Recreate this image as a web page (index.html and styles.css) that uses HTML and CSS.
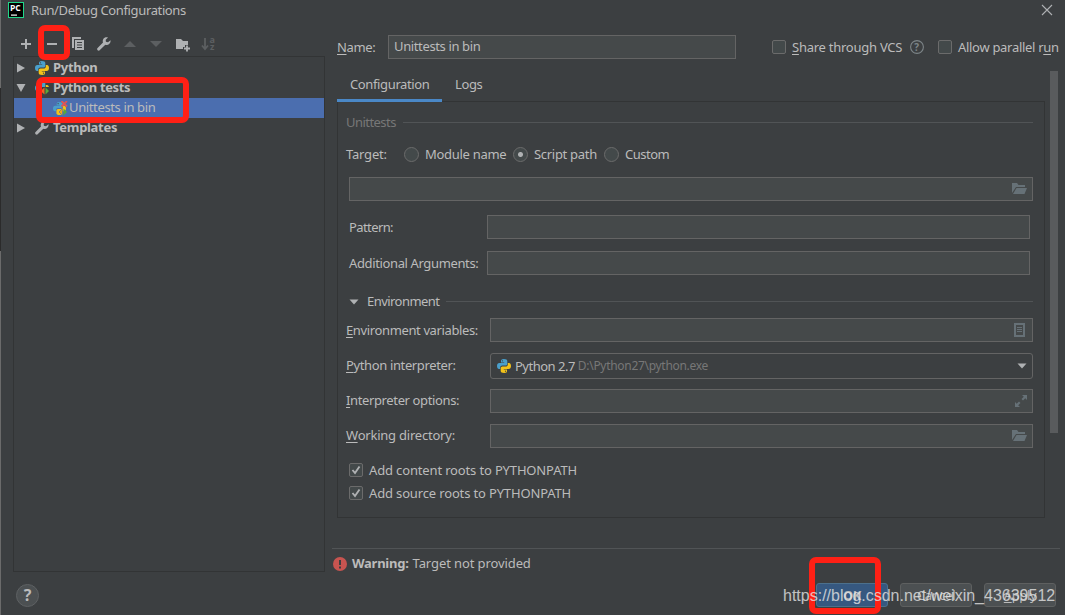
FILE: index.html
```html
<!DOCTYPE html>
<html lang="en">
<head>
    <meta charset="UTF-8">
    <meta name="viewport" content="width=device-width, initial-scale=1.0">
    <link rel="stylesheet" href="styles.css">
    <title>Run/Debug Configurations</title>
</head>
<body>
    <!-- Shared icons -->
    <svg class="defs" width="0" height="0">
        <symbol id="python" viewBox="0 0 14 14">
            <path fill="#4a9fcb" d="M6.800 0C4.400 0 4 1 4 2v1.400h3.200V4H2.300C.9 4 0 5.100 0 7c0 2 .9 3 2 3h1.200V8.600c0-1.300 1-2.100 2.200-2.100h3.200c1 0 1.700-.8 1.700-1.800V2c0-1.200-1-2-3.500-2z"/>
            <path fill="#f2c21a" d="M7.200 14c2.400 0 2.800-1 2.800-2v-1.400H6.800V10h4.900c1.400 0 2.300-1.100 2.300-3 0-2-.9-3-2-3h-1.200v1.400c0 1.300-1 2.100-2.200 2.100H5.400c-1 0-1.700.8-1.700 1.800V12c0 1.200 1 2 3.500 2z"/>
            <circle cx="5.500" cy="1.800" r=".6" fill="#3c3f41"/>
            <circle cx="8.500" cy="12.200" r=".6" fill="#3c3f41"/>
        </symbol>
        <symbol id="wrench" viewBox="0 0 14 14">
            <path fill="#afb1b3" d="M13.500 3.300 11 5.300 8.900 4.800 8.700 2.800 11 .5C9.200-.1 7.200.4 6.200 2.200c-.6 1.100-.6 2.200-.2 3.200L.6 10.900c-.8.8-.6 1.700 0 2.300.7.6 1.600.6 2.300-.1l5.400-5.400c1.300.5 2.900.3 4.100-.9 1-1 1.400-2.300 1.100-3.500z"/>
        </symbol>
        <symbol id="folder" viewBox="0 0 15 12">
            <path fill="#667177" d="M0 10V0h5l1.500 2H13v2H4L0 10z"/>
            <path fill="#667177" d="M4.500 5H15l-2.500 6H1z"/>
        </symbol>
    </svg>

    <div class="dialog">
        <div class="titlebar">
            <svg class="logo" width="16" height="16" viewBox="0 0 16 16">
                <rect width="16" height="16" fill="#21d789"/>
                <rect x="1" y="1" width="14" height="14" fill="#000"/>
                <text x="2" y="9" class="logo-text">PC</text>
                <rect x="3" y="12.500" width="6" height="1.200" fill="#fff"/>
            </svg>
            <span class="title">Run/Debug Configurations</span>
            <svg class="close" width="12" height="12" viewBox="0 0 12 12"><path d="M1 1l10 10M11 1L1 11" stroke="#afb1b3" stroke-width="1.100"/></svg>
        </div>

        <div class="main">
            <div class="sidebar">
                <div class="toolbar">
                    <svg width="16" height="16" viewBox="0 0 16 16"><path d="M8 3v10M3 8h10" stroke="#afb1b3" stroke-width="2"/></svg>
                    <svg width="16" height="16" viewBox="0 0 16 16"><path d="M3 8h10" stroke="#afb1b3" stroke-width="2"/></svg>
                    <svg width="16" height="16" viewBox="0 0 16 16"><path fill="#afb1b3" d="M2 1h9v2H4v9H2z"/><path fill="#afb1b3" fill-rule="evenodd" d="M5 4h9v10H5zM7 6v1h5V6zM7 8.500v1h5v-1zM7 11v1h5v-1z"/></svg>
                    <svg width="16" height="16" viewBox="0 0 16 16"><use href="#wrench" x="1" y="1" width="14" height="14"/></svg>
                    <svg width="16" height="16" viewBox="0 0 16 16"><path d="M2 11l6-6 6 6z" fill="#5c5f61"/></svg>
                    <svg width="16" height="16" viewBox="0 0 16 16"><path d="M2 5l6 6 6-6z" fill="#5c5f61"/></svg>
                    <svg width="16" height="16" viewBox="0 0 16 16"><path fill="#afb1b3" d="M2 3h5l2 2h5v4h-3v2H9v2H2z"/><path d="M13 9.500v6M10 12.500h6" stroke="#afb1b3" stroke-width="1.800"/></svg>
                    <svg width="16" height="16" viewBox="0 0 16 16"><path d="M5 2v10M2 9.500l3 3.500 3-3.500" stroke="#5c5f61" stroke-width="1.800" fill="none"/><text x="9.500" y="7" class="sort">a</text><text x="10" y="14" class="sort">z</text></svg>
                </div>
                <div class="tree">
                    <div class="node">
                        <svg class="arrow" width="10" height="12" viewBox="0 0 10 12"><path d="M1 1.500L9 6l-8 4.500z" fill="#afb1b3"/></svg>
                        <svg width="14" height="14"><use href="#python"/></svg>
                        <span>Python</span>
                    </div>
                    <div class="node">
                        <svg class="arrow" width="10" height="12" viewBox="0 0 10 12"><path d="M.5 2h9L5 10z" fill="#afb1b3"/></svg>
                        <svg width="14" height="14"><use href="#python"/><path d="M5 6h9v8H5z" fill="#3c3f41"/><path d="M9.500 6.500v7L5.500 10z" fill="#f26522"/><path d="M10.500 6.500v7L14 10z" fill="#59a83a"/></svg>
                        <span class="tests">Python tests</span>
                    </div>
                    <div class="node child">
                        <svg width="15" height="15"><use href="#python" y="1" width="13" height="13"/><path d="M9.500 7.500v7L6 11z" fill="#f2a51a" stroke="#4b6eaf" stroke-width=".6"/><path d="M10.500 7.500v7L14 11z" fill="#59a83a"/><path d="M8.500 0l5.500 5.500M14 0L8.500 5.500" stroke="#e05555" stroke-width="1.800"/></svg>
                        <span>Unittests in bin</span>
                    </div>
                    <div class="node">
                        <svg class="arrow" width="10" height="12" viewBox="0 0 10 12"><path d="M1 1.500L9 6l-8 4.500z" fill="#afb1b3"/></svg>
                        <svg width="14" height="14"><use href="#wrench"/></svg>
                        <span class="templates">Templates</span>
                    </div>
                </div>
            </div>

            <div class="content">
                <div class="name-row">
                    <span class="name-label"><u>N</u>ame:</span>
                    <div class="input name-input"><span>Unittests in bin</span></div>
                    <span class="checkbox"></span>
                    <span class="share"><u>S</u>hare through VCS</span>
                    <svg class="hint" width="14" height="14" viewBox="0 0 14 14"><circle cx="7" cy="7" r="6.400" fill="none" stroke="#7d8588" stroke-width="1.100"/><text x="4.300" y="10.500" class="hint-text">?</text></svg>
                    <span class="checkbox"></span>
                    <span class="parallel">Allow parallel r<u>u</u>n</span>
                </div>

                <div class="tabs">
                    <div class="tab active">Configuration</div>
                    <div class="tab">Logs</div>
                </div>

                <div class="scroll-area">
                    <div class="panel">
                        <div class="section muted"><span>Unittests</span><i></i></div>
                        <div class="target">
                            <span class="target-label">Target:</span>
                            <span class="radio"></span><span class="module">Module name</span>
                            <span class="radio checked"></span><span class="script">Script path</span>
                            <span class="radio"></span><span class="custom">Custom</span>
                        </div>
                        <div class="input path"><svg width="15" height="12"><use href="#folder"/></svg></div>
                        <div class="field upper"><span class="pattern">Pattern:</span><div class="input"></div></div>
                        <div class="field upper"><span class="additional">Additional Arguments:</span><div class="input"></div></div>

                        <div class="section env"><svg width="10" height="6" viewBox="0 0 10 6"><path d="M.5.500h9L5 5.500z" fill="#afb1b3"/></svg><span>Environment</span><i></i></div>
                        <div class="field first">
                            <span><u>E</u>nvironment variables:</span>
                            <div class="input"><svg class="doc" width="11" height="14" viewBox="0 0 11 14"><path d="M1 1h9v12H1z" fill="none" stroke="#667177" stroke-width="2"/><path d="M3 4.500h5M3 6.500h5M3 8.500h5" stroke="#667177"/></svg></div>
                        </div>
                        <div class="field raised">
                            <span><u>P</u>ython interpreter:</span>
                            <div class="input combo"><svg width="14" height="14"><use href="#python"/></svg><span class="version">Python 2.7</span><span class="exe">D:\Python27\python.exe</span><svg class="drop" width="10" height="6" viewBox="0 0 10 6"><path d="M.5.500h9L5 5.500z" fill="#afb1b3"/></svg></div>
                        </div>
                        <div class="field raised">
                            <span><u>I</u>nterpreter options:</span>
                            <div class="input"><svg width="12" height="12" viewBox="0 0 12 12"><path d="M7 0h5v5l-1.700-1.700L8 5.500 6.500 4l2.300-2.300zM5 12H0V7l1.700 1.700L4 6.500 5.500 8l-2.300 2.300z" fill="#667177"/></svg></div>
                        </div>
                        <div class="field raised last">
                            <span class="directory"><u>W</u>orking directory:</span>
                            <div class="input"><svg width="15" height="12"><use href="#folder"/></svg></div>
                        </div>
                        <div class="check"><span class="checkbox"><svg width="12" height="12" viewBox="0 0 12 12"><path d="M2.500 6l2.500 3L9.500 2.500" fill="none" stroke="#afb1b3" stroke-width="1.900"/></svg></span><span class="roots">Add content roots to PYTHONPATH</span></div>
                        <div class="check"><span class="checkbox"><svg width="12" height="12" viewBox="0 0 12 12"><path d="M2.500 6l2.500 3L9.500 2.500" fill="none" stroke="#afb1b3" stroke-width="1.900"/></svg></span><span class="roots">Add source roots to PYTHONPATH</span></div>
                    </div>
                    <div class="scrollbar"></div>
                </div>

                <div class="warning">
                    <svg width="14" height="14" viewBox="0 0 14 14"><circle cx="7" cy="7" r="7" fill="#c75450"/><path d="M6 3h2v5H6zM6 9.500h2v2H6z" fill="#3c3f41"/></svg>
                    <b>Warning:</b><span>Target not provided</span>
                </div>
            </div>
        </div>

        <div class="footer">
            <div class="help">?</div>
            <div class="button primary">OK</div>
            <div class="button">Cancel</div>
            <div class="button"><u>A</u>pply</div>
        </div>
    </div>

    <!-- Highlights -->
    <div class="mark mark-remove"></div>
    <div class="mark mark-tests"></div>
    <div class="mark mark-ok"></div>
    <div class="watermark">https://blog.csdn.net/weixin_43639512</div>
</body>
</html>
```
FILE: styles.css
```css
* {
    box-sizing: border-box;
}

body {
    margin: 0;
    width: 1065px;
    height: 615px;
    overflow: hidden;
    position: relative;
    background-color: #3c3f41;
    color: #bbbbbb;
    font-family: "Noto Sans", "Open Sans", sans-serif;
    font-size: 13px;
    letter-spacing: -0.37px;
    line-height: 20px;
    white-space: nowrap;
}

svg {
    display: block;
    flex-shrink: 0;
}

.defs {
    position: absolute;
}

u {
    text-underline-offset: 2px;
    text-decoration-thickness: 1px;
}

.dialog {
    height: 615px;
    display: flex;
    flex-direction: column;
    padding-left: 1px;
    background: linear-gradient(#6b6b6b 88px, #2b2b2b 88px, #2b2b2b 251px, #6b6b6b 251px) left / 1px 100% no-repeat;
}

/* Title bar */
.titlebar {
    height: 22px;
    display: flex;
    align-items: center;
    padding: 0 12px 2px 7px;
}

.title {
    margin-left: 7px;
    flex: 1;
}

.logo-text {
    font: bold 8.500px "Open Sans", sans-serif;
    letter-spacing: 0;
    fill: #ffffff;
}

.main {
    display: flex;
    height: 554px;
}

/* Left side */
.sidebar {
    width: 312px;
    margin-left: 12px;
}

.toolbar {
    height: 34px;
    display: flex;
    align-items: center;
    gap: 10px;
    padding: 10px 0 0 5px;
}

.toolbar svg {
    overflow: visible;
}

.sort {
    font: bold 9px "Open Sans", sans-serif;
    fill: #5c5f61;
}

.tree {
    height: 516px;
    padding-top: 1px;
    border: 1px solid #323435;
}

.node {
    height: 20px;
    display: flex;
    align-items: center;
    padding-left: 2px;
    font-weight: bold;
    letter-spacing: -0.3px;
}

.arrow {
    margin-right: 9px;
}

.node span {
    margin-left: 4px;
    padding-bottom: 2px;
}

.tests {
    letter-spacing: -0.38px;
}

.child {
    background-color: #4b6eaf;
    font-weight: normal;
    letter-spacing: -0.37px;
    padding-left: 39px;
}

.child span {
    margin-left: 1px;
}

/* Right side */
.content {
    width: 728px;
    margin-left: 7px;
}

.name-row {
    height: 50px;
    display: flex;
    align-items: center;
    padding-left: 5px;
}

.name-row > span {
    flex: none;
}

.name-label {
    width: 51px;
}

.input {
    height: 24px;
    flex: 1;
    display: flex;
    align-items: center;
    justify-content: flex-end;
    padding-right: 5px;
    border: 1px solid #646464;
    background-color: #45494a;
}

.name-input {
    flex: none;
    width: 348px;
    justify-content: flex-start;
    padding: 0 5px 2px;
    margin-right: 36px;
}

.checkbox {
    width: 14px;
    height: 14px;
    flex: none;
    border: 1px solid #6b6b6b;
    border-radius: 2px;
    background-color: #43494a;
    margin-right: 6px;
}

.share {
    width: 112px;
    letter-spacing: -0.25px;
}

.parallel {
    letter-spacing: -0.3px;
}

.hint {
    margin: 0 14px 0 6px;
}

.hint-text {
    font: bold 10px "Open Sans", sans-serif;
    fill: #7d8588;
}

.tabs {
    height: 30px;
    display: flex;
    padding-left: 5px;
    position: relative;
}

.tab {
    padding: 2px 13px 0;
}

.tab.active {
    width: 105px;
    border-bottom: 3px solid #4a88c7;
}

.scroll-area {
    display: flex;
    height: 447px;
    padding-left: 5px;
    margin-top: -1px;
}

.panel {
    width: 708px;
    height: 417px;
    padding: 11px 11px 0 8px;
    border: 1px solid #323435;
}

.scrollbar {
    width: 8px;
    height: 362px;
    margin: -30px 0 0 5px;
    background-color: #595b5d;
}

.section {
    height: 20px;
    display: flex;
    align-items: center;
    letter-spacing: -0.55px;
}

.section span {
    padding-bottom: 2px;
}

.section i {
    flex: 1;
    height: 1px;
    margin: 0 0 1px 7px;
    background-color: #515456;
}

.muted {
    color: #777777;
}

.target {
    height: 20px;
    display: flex;
    align-items: center;
    margin-top: 12px;
}

.target > span:not(.radio) {
    padding-bottom: 2px;
}

.target-label {
    width: 58px;
    letter-spacing: -0.2px;
}

.radio {
    width: 15px;
    height: 15px;
    margin: 0 6px 2px 0;
    border: 1px solid #6b6b6b;
    border-radius: 50%;
    background-color: #43494a;
}

.radio.checked {
    background-image: radial-gradient(circle, #afb1b3 2px, transparent 3px);
}

.module {
    width: 88px;
    letter-spacing: -0.3px;
}

.script {
    width: 70px;
    letter-spacing: -0.3px;
}

.custom {
    letter-spacing: -0.5px;
}

.path {
    margin: 12px 0 14px 3px;
}

.field {
    height: 24px;
    display: flex;
    align-items: center;
    margin-bottom: 11px;
}

.field > span {
    width: 144px;
}

.raised > span {
    padding-bottom: 2px;
}

.first {
    margin-bottom: 12px;
}

.last {
    margin-bottom: 10px;
}

.directory {
    letter-spacing: -0.22px;
}

.upper {
    margin-bottom: 12px;
    padding: 0 3px;
}

.upper > span {
    width: 138px;
}

.pattern {
    letter-spacing: -0.6px;
}

.env {
    margin: 17px 0 6px;
    padding-left: 3px;
}

.env span {
    margin-left: 8px;
}

.doc {
    margin-right: 2px;
}

.combo {
    height: 26px;
    justify-content: flex-start;
    padding-left: 6px;
    border-radius: 3px;
    background-color: transparent;
}

.version {
    margin-left: 4px;
    letter-spacing: -0.5px;
}

.exe {
    margin-left: 3px;
    font-size: 12px;
    letter-spacing: -0.3px;
    color: #777777;
}

.drop {
    margin-left: auto;
}

.check {
    height: 23px;
    display: flex;
    align-items: center;
    padding-left: 3px;
}

.roots {
    letter-spacing: -0.15px;
}

.warning {
    height: 31px;
    display: flex;
    align-items: center;
    gap: 4px;
    border-top: 1px solid #515456;
    padding-left: 1px;
    letter-spacing: -0.1px;
}

.warning b,
.warning span {
    padding-bottom: 2px;
}

.warning b {
    margin-left: 1px;
    letter-spacing: -0.25px;
}

.footer {
    display: flex;
    padding: 7px 9px 0 15px;
    gap: 12px;
}

.help {
    width: 23px;
    height: 23px;
    margin: 1px auto 0 0;
    border: 1px solid #5e6163;
    border-radius: 50%;
    background-color: #4c5052;
    font-size: 16px;
    font-weight: bold;
    text-align: center;
}

.button {
    width: 72px;
    height: 24px;
    border: 1px solid #5e6060;
    border-radius: 3px;
    background-color: #4c5052;
    text-align: center;
    line-height: 23px;
}

.primary {
    border-color: #4c708c;
    background-color: #365880;
    font-weight: bold;
}

/* Highlights */
.mark {
    position: absolute;
    border: 6px solid #ff2015;
    border-radius: 7px;
}

.mark-remove {
    left: 38px;
    top: 25px;
    width: 32px;
    height: 35px;
}

.mark-tests {
    left: 36px;
    top: 77px;
    width: 153px;
    height: 46px;
}

.mark-ok {
    left: 809px;
    top: 557px;
    width: 72px;
    height: 57px;
}

.watermark {
    position: absolute;
    left: 783px;
    top: 586px;
    font-family: "Liberation Sans", Arial, sans-serif;
    font-size: 16px;
    letter-spacing: 0;
    color: rgba(230, 230, 230, 0.8);
}
```
